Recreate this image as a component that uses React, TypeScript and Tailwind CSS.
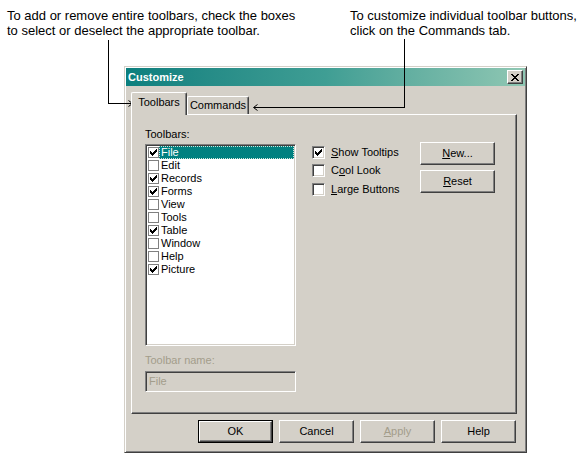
import React from 'react';

const raised =
  'border border-t-white border-l-white border-r-[#404040] border-b-[#404040] shadow-[inset_-1px_-1px_#808080,inset_1px_1px_#d4d0c8]';
const sunken =
  'border border-t-[#808080] border-l-[#808080] border-r-white border-b-white shadow-[inset_1px_1px_#404040,inset_-1px_-1px_#d4d0c8]';

const toolbars = [
  { name: 'File', on: true },
  { name: 'Edit', on: false },
  { name: 'Records', on: true },
  { name: 'Forms', on: true },
  { name: 'View', on: false },
  { name: 'Tools', on: false },
  { name: 'Table', on: true },
  { name: 'Window', on: false },
  { name: 'Help', on: false },
  { name: 'Picture', on: true },
];

function Check() {
  return (
    <svg width="7" height="7" viewBox="0 0 7 7" shapeRendering="crispEdges">
      <path
        d="M6 0h1v1H6z M5 1h2v1H5z M0 2h1v1H0z M4 2h3v1H4z M0 3h2v1H0z M3 3h3v1H3z M0 4h5v1H0z M1 5h3v1H1z M2 6h1v1H2z"
        fill="#000"
      />
    </svg>
  );
}

function Checkbox({ checked }: { checked: boolean }) {
  return (
    <span className={`w-[13px] h-[13px] bg-white flex items-center justify-center shrink-0 ${sunken}`}>
      {checked && <Check />}
    </span>
  );
}

function Button({ children, className = '', disabled = false }: { children: React.ReactNode; className?: string; disabled?: boolean }) {
  return (
    <div
      className={`w-[75px] h-[23px] flex items-center justify-center bg-[#d4d0c8] text-[11px] ${disabled ? 'text-[#a39d8b]' : 'text-black'} ${raised} ${className}`}
    >
      {children}
    </div>
  );
}

export default function App() {
  return (
    <div
      className="relative w-[582px] h-[459px] bg-white overflow-hidden text-black"
      style={{ fontFamily: '"Liberation Sans", Arial, sans-serif' }}
    >
      {/* callout texts */}
      <div className="flex pt-[8px] text-[13px] leading-[15px]">
        <p className="pl-[7px] w-[350px]">
          To add or remove entire toolbars, check the boxes
          <br />
          to select or deselect the appropriate toolbar.
        </p>
        <p>
          To customize individual toolbar buttons,
          <br />
          click on the Commands tab.
        </p>
      </div>

      {/* dialog */}
      <div className="ml-[124px] mt-[28px] w-[403px] h-[387px] bg-[#d4d0c8] p-[1px] flex flex-col border border-t-[#d4d0c8] border-l-[#d4d0c8] border-r-[#404040] border-b-[#404040] shadow-[inset_1px_1px_#fff,inset_-1px_-1px_#808080]">
        <div className="h-[18px] shrink-0 flex items-center pl-[2px] pr-[2px] bg-linear-to-r from-[#0a7f7e] via-[#3f9e94] to-[#8fc7b3]">
          <span className="text-white font-bold text-[11px] leading-none">Customize</span>
          <div className={`ml-auto w-[16px] h-[14px] bg-[#d4d0c8] flex items-center justify-center ${raised}`}>
            <svg width="8" height="7" viewBox="0 0 8 7" shapeRendering="crispEdges">
              <path d="M0 0h2l2 2.5L6 0h2L5 3.5 8 7H6L4 4.5 2 7H0l3-3.5z" fill="#000" />
            </svg>
          </div>
        </div>

        <div className="pl-[5px] pt-[6px] flex flex-col">
          {/* tabs */}
          <div className="flex items-end h-[22px] text-[11px]">
            <div className="relative z-10 w-[56px] h-[23px] -mb-[1px] bg-[#d4d0c8] rounded-t-[2px] border border-b-0 border-t-white border-l-white border-r-[#404040] shadow-[inset_-1px_0_#808080] flex items-center justify-center pb-[3px]">
              Toolbars
            </div>
            <div className="w-[62px] h-[18px] bg-[#d4d0c8] rounded-t-[2px] border border-b-0 border-t-white border-l-white border-r-[#404040] shadow-[inset_-1px_0_#808080] flex items-center justify-center">
              Commands
            </div>
          </div>

          {/* tab panel */}
          <div className="w-[386px] h-[300px] pl-[13px] pt-[13px] flex border border-t-white border-l-white border-r-[#404040] border-b-[#404040] shadow-[inset_-1px_-1px_#808080]">
            <div className="w-[151px] flex flex-col text-[11px]">
              <div className="leading-[13px] h-[13px] mb-[3px]">Toolbars:</div>
              <div className={`h-[202px] bg-white pt-[1px] ${sunken}`}>
                {toolbars.map((t, i) => (
                  <div key={t.name} className="h-[13px] flex items-center pl-[2px] pr-[1px]">
                    <span className="w-[11px] h-[11px] border border-[#808080] bg-white flex items-center justify-center shrink-0">
                      {t.on && <Check />}
                    </span>
                    <span
                      className={`flex-1 h-[13px] leading-[11px] pl-[1px] ${
                        i === 0 ? 'bg-[#008080] text-white border border-dotted border-[#cfe6dc]' : 'border border-transparent'
                      }`}
                    >
                      {t.name}
                    </span>
                  </div>
                ))}
              </div>
              <div className="mt-[8px] h-[13px] leading-[13px] text-[#a39d8b]">Toolbar name:</div>
              <div className={`mt-[4px] h-[21px] bg-[#d4d0c8] flex items-center pl-[3px] text-[#a39d8b] ${sunken}`}>File</div>
            </div>

            <div className="ml-[16px] w-[108px] pt-[18px] flex flex-col gap-[5px] text-[11px] leading-[13px]">
              <div className="flex items-center gap-[6px] h-[13px]">
                <Checkbox checked />
                <span>
                  <u>S</u>how Tooltips
                </span>
              </div>
              <div className="flex items-center gap-[6px] h-[13px]">
                <Checkbox checked={false} />
                <span>
                  C<u>o</u>ol Look
                </span>
              </div>
              <div className="flex items-center gap-[6px] h-[13px] mt-[1px]">
                <Checkbox checked={false} />
                <span>
                  <u>L</u>arge Buttons
                </span>
              </div>
            </div>

            <div className="pt-[14px] flex flex-col gap-[5px]">
              <Button>
                <span>
                  <u>N</u>ew...
                </span>
              </Button>
              <Button>
                <span>
                  <u>R</u>eset
                </span>
              </Button>
            </div>
          </div>

          {/* dialog buttons */}
          <div className="mt-[6px] w-[386px] flex justify-end gap-[6px] pr-[1px]">
            <div className="w-[75px] h-[23px] border border-black">
              <div className={`w-full h-full flex items-center justify-center text-[11px] bg-[#d4d0c8] ${raised}`}>OK</div>
            </div>
            <Button>Cancel</Button>
            <Button disabled>
              <span>
                <u>A</u>pply
              </span>
            </Button>
            <Button>Help</Button>
          </div>
        </div>
      </div>

      {/* callout lines */}
      <svg className="absolute inset-0 pointer-events-none" width="582" height="459" shapeRendering="crispEdges">
        <polyline points="108.5,40 108.5,103.5 132,103.5" fill="none" stroke="#000" strokeWidth="1" />
        <polyline points="128.5,100.5 132.5,103.5 128.5,106.5" fill="none" stroke="#000" strokeWidth="1" shapeRendering="auto" />
        <polyline points="404.5,39 404.5,107.5 254,107.5" fill="none" stroke="#000" strokeWidth="1" />
        <polyline points="257.5,104.5 253.5,107.5 257.5,110.5" fill="none" stroke="#000" strokeWidth="1" shapeRendering="auto" />
      </svg>
    </div>
  );
}
